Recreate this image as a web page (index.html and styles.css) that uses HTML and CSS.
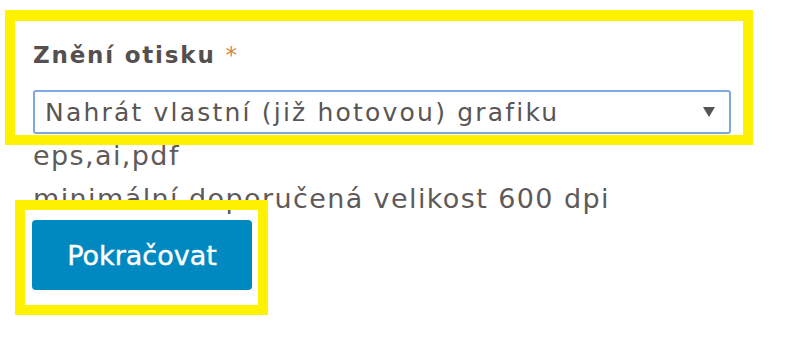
FILE: index.html
```html
<!DOCTYPE html>
<html lang="cs">
<head>
	<meta charset="UTF-8">
	<title>Znění otisku</title>
	<link rel="stylesheet" href="styles.css">
</head>
<body>
	<div class="form">
		<div class="field-label">Znění otisku <span class="req">*</span></div>
		<div class="select-wrap">
			<select class="select">
				<option>Nahrát vlastní (již hotovou) grafiku</option>
			</select>
			<svg class="arrow" width="12" height="12" viewBox="0 0 12 12"><path d="M0 1h12L6 11z" fill="#555"/></svg>
		</div>
		<div class="hint">
			<div>eps,ai,pdf</div>
			<div>minimální doporučená velikost 600 dpi</div>
		</div>
		<button class="btn" type="button">Pokračovat</button>
	</div>

	<!-- zvýraznění -->
	<div class="mark mark-1"></div>
	<div class="mark mark-2"></div>
</body>
</html>
```

FILE: styles.css
```css
body {
	margin: 0;
	background-color: #fff;
	font-family: "DejaVu Sans", Verdana, sans-serif;
	color: #555;
}
.form {
	padding: 42px 0 0 33px;
}
.field-label {
	font-size: 23px;
	line-height: 26px;
	font-weight: bold;
	letter-spacing: 1.8px;
	color: #554f4f;
}
.req {
	color: #d0884a;
	font-weight: normal;
}
.select-wrap {
	position: relative;
	width: 698px;
	margin-top: 22px;
}
.select {
	display: block;
	width: 100%;
	height: 44px;
	margin: 0;
	padding: 0 0 0 10px;
	border: 2px solid #7ea8e2;
	border-radius: 3px;
	background-color: #fff;
	font: 25px "DejaVu Sans", Verdana, sans-serif;
	letter-spacing: 2.2px;
	color: #5a5555;
	-webkit-appearance: none;
	appearance: none;
	outline: none;
}
.arrow {
	position: absolute;
	right: 16px;
	top: 16px;
}
.hint {
	font-size: 27px;
	line-height: 43px;
	letter-spacing: 1.4px;
	color: #5f5a5a;
}
.btn {
	display: block;
	width: 220px;
	height: 70px;
	margin: 0 0 0 -1px;
	padding: 0;
	border: 0;
	border-radius: 4px;
	background-color: #0089c0;
	color: #fff;
	font: 27px "DejaVu Sans", Verdana, sans-serif;
	-webkit-text-stroke: 0.4px #fff;
	cursor: pointer;
}
.mark {
	position: absolute;
	border: 10px solid #fff200;
	pointer-events: none;
}
.mark-1 {
	left: 5px;
	top: 10px;
	width: 728px;
	height: 114px;
	border-top-width: 11px;
}
.mark-2 {
	left: 15px;
	top: 200px;
	width: 233px;
	height: 95px;
}
```
